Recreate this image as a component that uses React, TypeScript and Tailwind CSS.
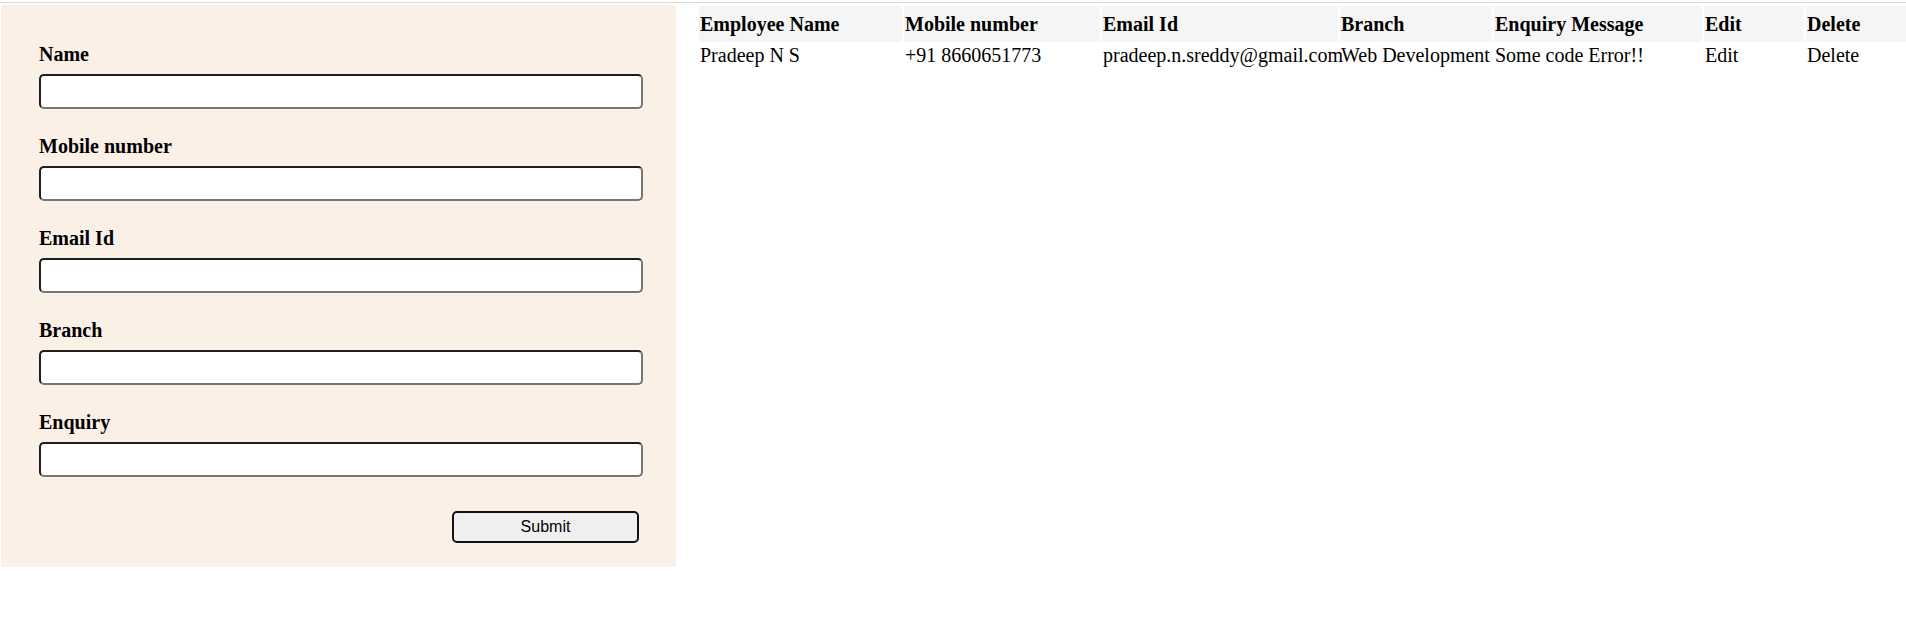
import React from 'react';

interface Enquiry {
  name: string;
  mobile: string;
  email: string;
  branch: string;
  message: string;
}

const fields = ['Name', 'Mobile number', 'Email Id', 'Branch', 'Enquiry'];

const columns: { label: string; width: string }[] = [
  { label: 'Employee Name', width: 'w-[203px]' },
  { label: 'Mobile number', width: 'w-[196px]' },
  { label: 'Email Id', width: 'w-[236px]' },
  { label: 'Branch', width: 'w-[152px]' },
  { label: 'Enquiry Message', width: 'w-[208px]' },
  { label: 'Edit', width: 'w-[100px]' },
  { label: 'Delete', width: 'w-[100px]' },
];

const rows: Enquiry[] = [
  {
    name: 'Pradeep N S',
    mobile: '+91 8660651773',
    email: 'pradeep.n.sreddy@gmail.com',
    branch: 'Web Development',
    message: 'Some code Error!!',
  },
];

const EnquiryForm: React.FC = () => (
  <form
    className="ml-px mt-px w-[675px] h-[562px] shrink-0 bg-[#faf0e6] pt-[38px] pl-[38px]"
    onSubmit={(e) => e.preventDefault()}
  >
    {fields.map((label) => (
      <div key={label} className="mb-[26px]">
        <label className="block mb-[8px] text-[20px] leading-[23px] font-bold">{label}</label>
        <input
          type="text"
          className="block w-[604px] h-[35px] bg-white rounded-[5px] border-2 border-t-[#1f1f1f] border-l-[#1f1f1f] border-b-[#767676] border-r-[#767676] px-1 outline-none"
        />
      </div>
    ))}
    {/* margins collapse with the field above, so this is the full gap */}
    <div className="flex justify-end w-[604px] pr-[4px] mt-[34px]">
      <button
        type="submit"
        className="w-[187px] h-[32px] bg-[#efefef] border-2 border-[#111] rounded-[5px] font-['Liberation_Sans',Arial,sans-serif] text-[16px] text-black"
      >
        Submit
      </button>
    </div>
  </form>
);

const EnquiryTable: React.FC = () => (
  <div className="flex-1 min-w-0 overflow-hidden ml-[21px]">
    <table className="table-fixed w-[1211px] border-separate border-spacing-[2px] text-[20px] leading-[23px]">
      <thead>
        <tr>
          {columns.map((c) => (
            <th key={c.label} className={`${c.width} h-[36px] px-px text-left font-bold bg-[#f5f5f5]`}>
              {c.label}
            </th>
          ))}
        </tr>
      </thead>
      <tbody>
        {rows.map((r, idx) => (
          <tr key={idx}>
            <td className="px-px whitespace-nowrap">{r.name}</td>
            <td className="px-px whitespace-nowrap">{r.mobile}</td>
            <td className="px-px whitespace-nowrap">{r.email}</td>
            <td className="px-px whitespace-nowrap">{r.branch}</td>
            <td className="px-px whitespace-nowrap">{r.message}</td>
            <td className="px-px">Edit</td>
            <td className="px-px">Delete</td>
          </tr>
        ))}
      </tbody>
    </table>
  </div>
);

export default function App() {
  return (
    <div className="min-h-[643px] bg-white text-black font-['Liberation_Serif','Times_New_Roman',serif]">
      <div className="pt-[2px]">
        <div className="h-px bg-[#d9d9d9]" />
      </div>
      <div className="flex items-start pt-[1px]">
        <EnquiryForm />
        <EnquiryTable />
      </div>
    </div>
  );
}
